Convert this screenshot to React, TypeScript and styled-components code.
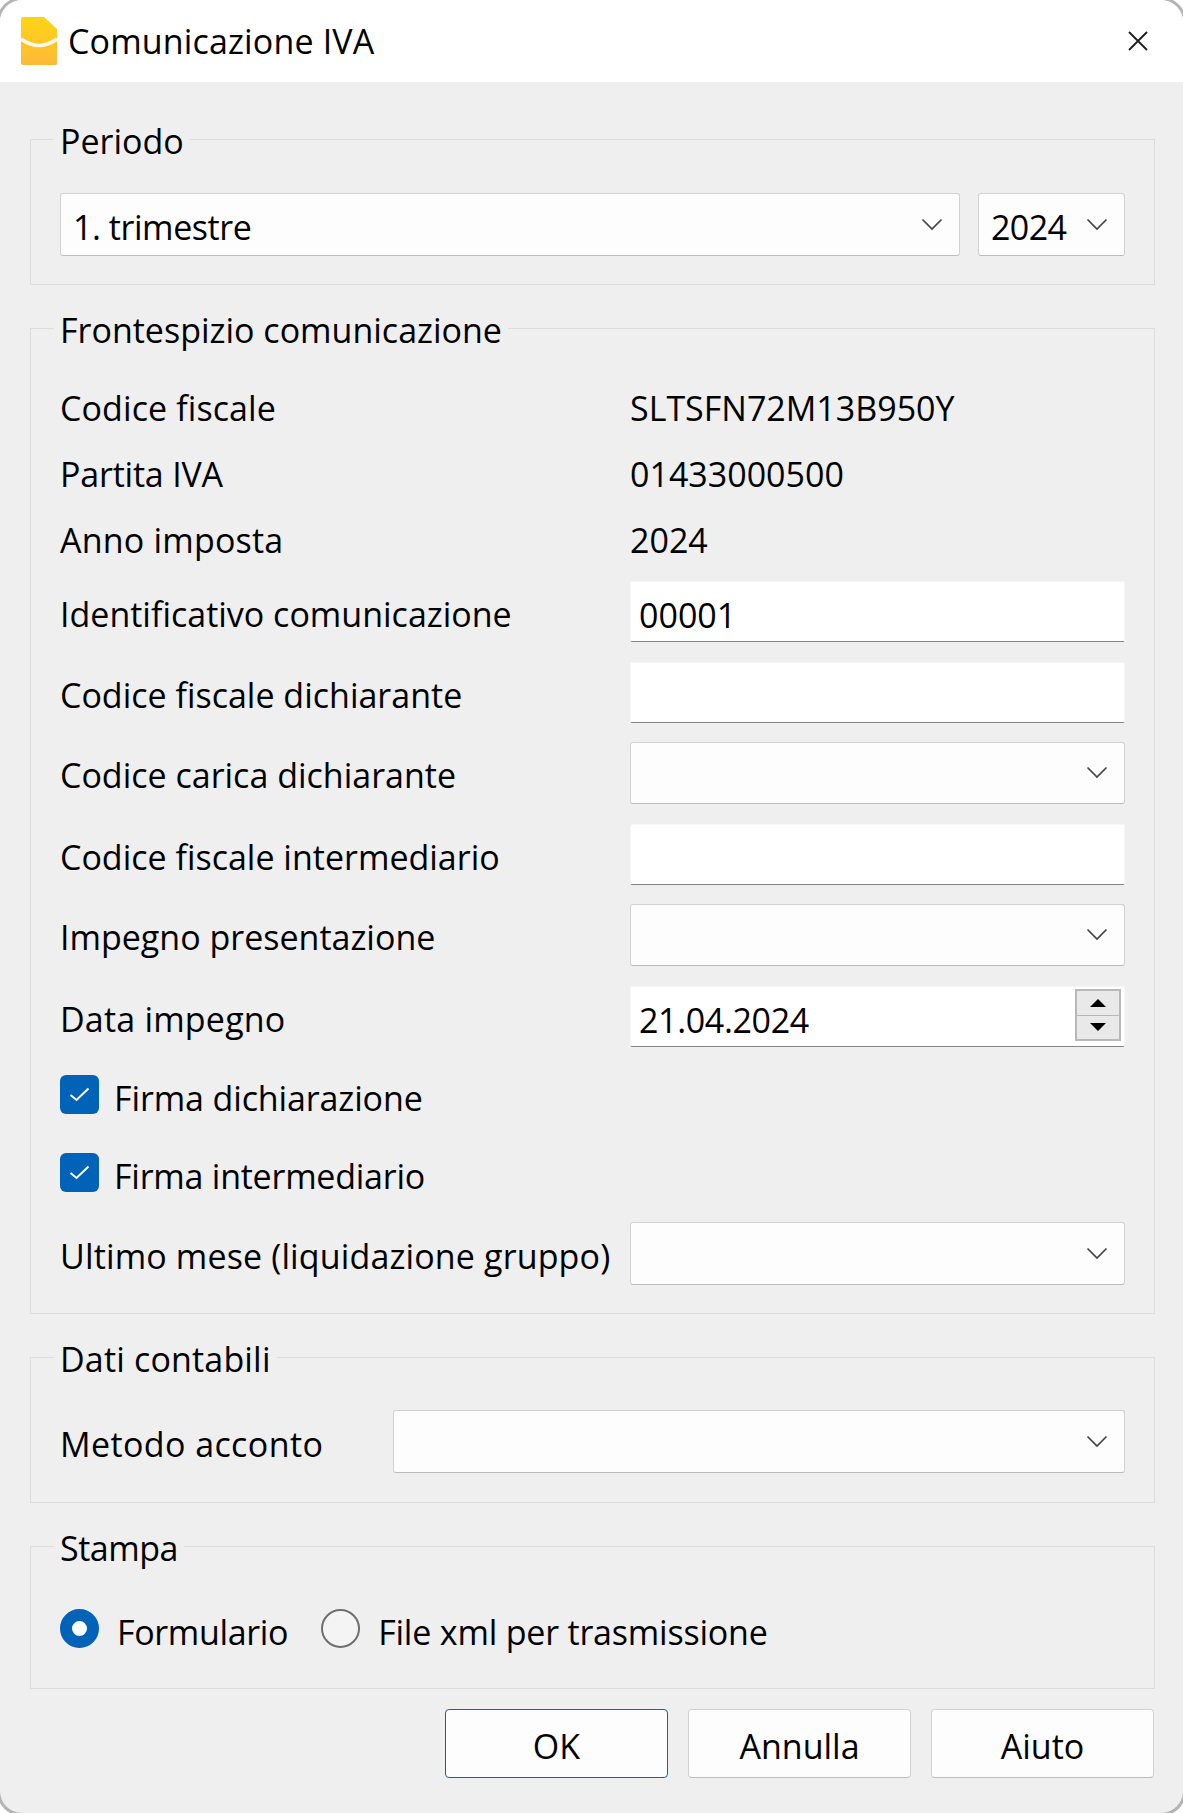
import styled, { createGlobalStyle } from "styled-components";

const GlobalStyle = createGlobalStyle`
  html, body {
    margin: 0;
    padding: 0;
    background: #ffffff;
  }
  body {
    font-family: "Open Sans", "Noto Sans", sans-serif;
    font-size: 34px;
    color: #000000;
  }
  * {
    box-sizing: border-box;
  }
`;

const Window = styled.div`
  width: 1183px;
  height: 1813px;
  display: flex;
  flex-direction: column;
  background: #efefef;
  border-radius: 22px;
  overflow: hidden;
  box-shadow: 0 0 0 3px #b4b4b4;
`;

const TitleBar = styled.header`
  height: 82px;
  flex: none;
  display: flex;
  align-items: center;
  background: #ffffff;
  padding: 0 35px 0 21px;
`;

const AppIcon = styled.svg`
  width: 36px;
  height: 48px;
  flex: none;
`;

const Title = styled.h1`
  flex: 1;
  margin: 0 0 0 11px;
  font-size: 34px;
  font-weight: 400;
  letter-spacing: 0.15px;
`;

const CloseIcon = styled.svg`
  width: 20px;
  height: 20px;
  flex: none;
`;

const Content = styled.main`
  flex: 1;
  display: flex;
  flex-direction: column;
  gap: 23px;
  padding: 37px 28px 0 30px;
`;

const Group = styled.fieldset<{ $top: number; $bottom?: number }>`
  margin: 0;
  min-width: 0;
  border: 1px solid #dcdcdc;
  padding: ${(p) => p.$top}px 29px ${(p) => p.$bottom ?? 28}px 29px;
`;

const Legend = styled.legend<{ $track?: number }>`
  margin-left: -6px;
  padding: 0 6px;
  height: 40px;
  line-height: 44px;
  letter-spacing: ${(p) => p.$track ?? 0}px;
`;

const PeriodRow = styled.div`
  display: flex;
  gap: 18px;
`;

const SelectBox = styled.div<{ $width?: number; $track?: number }>`
  height: 63px;
  flex: ${(p) => (p.$width ? `0 0 ${p.$width}px` : "1")};
  display: flex;
  align-items: center;
  justify-content: space-between;
  padding: 4px 16px 0 12px;
  background: #fdfdfd;
  border: 1px solid #d2d2d2;
  border-bottom-color: #bcbcbc;
  border-radius: 3px;
  letter-spacing: ${(p) => p.$track ?? 0}px;
`;

const Chevron = styled.svg`
  width: 22px;
  height: 13px;
  flex: none;
  margin-top: -5px;
  margin-left: auto;
`;

const StaticList = styled.div`
  margin-bottom: 8px;
`;

const StaticRow = styled.div`
  height: 66px;
  display: grid;
  grid-template-columns: 570px 1fr;
  align-items: center;
`;

const Label = styled.span<{ $track?: number }>`
  white-space: nowrap;
  letter-spacing: ${(p) => p.$track ?? 0}px;
`;

const FieldStack = styled.div`
  display: flex;
  flex-direction: column;
`;

const FieldRow = styled.div<{ $gap: number; $height: number }>`
  height: ${(p) => p.$height}px;
  margin-bottom: ${(p) => p.$gap}px;
  display: grid;
  grid-template-columns: 570px 1fr;
  align-items: stretch;
  ${Label} {
    align-self: center;
    margin-top: 4px;
  }
  ${SelectBox} {
    height: 100%;
  }
`;

const TextField = styled.div<{ $track?: number }>`
  position: relative;
  display: flex;
  align-items: center;
  padding: 6px 8px 0;
  background: #ffffff;
  border: 1px solid #f6f6f6;
  border-bottom: 1px solid #858585;
  border-radius: 2px;
  letter-spacing: ${(p) => p.$track ?? 0}px;
`;

const Spinner = styled.div`
  position: absolute;
  top: 2px;
  right: 3px;
  width: 46px;
  height: 52px;
  display: flex;
  flex-direction: column;
  border: 2px solid #b8b8b8;
  background: #e9e9e9;
`;

const SpinButton = styled.div<{ $down?: boolean }>`
  flex: 1;
  display: flex;
  align-items: center;
  justify-content: center;
  border-top: ${(p) => (p.$down ? "1px solid #b8b8b8" : "none")};
  &::before {
    content: "";
    width: 0;
    height: 0;
    border-left: 8px solid transparent;
    border-right: 8px solid transparent;
    ${(p) =>
      p.$down ? "border-top: 8px solid #000000;" : "border-bottom: 8px solid #000000;"}
  }
`;

const CheckRow = styled.div<{ $gap: number }>`
  display: flex;
  align-items: center;
  gap: 15px;
  height: 39px;
  margin-bottom: ${(p) => p.$gap}px;
`;

const CheckBox = styled.span`
  width: 39px;
  height: 39px;
  flex: none;
  display: flex;
  align-items: center;
  justify-content: center;
  background: #0063b8;
  border-radius: 6px;
`;

const CheckText = styled(Label)`
  margin-top: 6px;
`;

const MethodRow = styled.div`
  display: grid;
  grid-template-columns: 333px 1fr;
  align-items: center;
  height: 63px;
  ${Label} {
    margin-top: 5px;
  }
  ${SelectBox} {
    height: 100%;
  }
`;

const RadioRow = styled.div`
  display: flex;
  align-items: center;
  height: 39px;
`;

const RadioLabel = styled(Label)<{ $gap: number }>`
  margin: 7px ${(p) => p.$gap}px 0 18px;
`;

const Radio = styled.span<{ $checked?: boolean }>`
  width: 39px;
  height: 39px;
  flex: none;
  border-radius: 50%;
  background: ${(p) => (p.$checked ? "#ffffff" : "#f4f4f4")};
  border: ${(p) => (p.$checked ? "12px solid #0063b8" : "2px solid #6e6e6e")};
`;

const ButtonBar = styled.footer`
  display: flex;
  justify-content: flex-end;
  gap: 20px;
  margin-top: -3px;
  padding-right: 1px;
`;

const Button = styled.button<{ $primary?: boolean }>`
  width: 223px;
  height: 69px;
  padding: 4px 0 0;
  background: #fdfdfd;
  border: 1px solid ${(p) => (p.$primary ? "#0067c0" : "#d2d2d2")};
  border-bottom-color: ${(p) => (p.$primary ? "#0067c0" : "#bcbcbc")};
  border-radius: 4px;
  font-family: inherit;
  font-size: 34px;
  color: #000000;
`;

const ChevronIcon = () => (
  <Chevron viewBox="0 0 22 13" fill="none">
    <path d="M1.5 1.5 L11 11 L20.5 1.5" stroke="#444444" strokeWidth="1.7" />
  </Chevron>
);

const Tick = () => (
  <svg width="21" height="15" viewBox="0 0 21 15" fill="none">
    <path d="M1.5 8 L7.5 13 L19.5 1.5" stroke="#ffffff" strokeWidth="2" />
  </svg>
);

const staticRows = [
  { name: "Codice fiscale", value: "SLTSFN72M13B950Y", track: 0.1 },
  { name: "Partita IVA", value: "01433000500", track: -0.2 },
  { name: "Anno imposta", value: "2024", track: 0.2 },
];

export default function App() {
  return (
    <>
      <GlobalStyle />
      <Window>
        <TitleBar>
          <AppIcon viewBox="0 0 36 48">
            <defs>
              <linearGradient id="icon-fill" x1="0" y1="0" x2="0" y2="1">
                <stop offset="0" stopColor="#ffd516" />
                <stop offset="1" stopColor="#fdb937" />
              </linearGradient>
            </defs>
            <path
              d="M2 0 H23 L36 12 V46 Q36 48 34 48 H2 Q0 48 0 46 V2 Q0 0 2 0 Z"
              fill="url(#icon-fill)"
            />
            <path d="M0 22 Q18 35 36 22" stroke="#fff8e6" strokeWidth="3.5" fill="none" />
          </AppIcon>
          <Title>Comunicazione IVA</Title>
          <CloseIcon viewBox="0 0 20 20" fill="none">
            <path d="M1 1 L19 19 M19 1 L1 19" stroke="#1c1c1c" strokeWidth="1.8" />
          </CloseIcon>
        </TitleBar>
        <Content>
          <Group $top={34}>
            <Legend>Periodo</Legend>
            <PeriodRow>
              <SelectBox $track={-0.45}>
                1. trimestre
                <ChevronIcon />
              </SelectBox>
              <SelectBox $width={147} $track={-0.6}>
                2024
                <ChevronIcon />
              </SelectBox>
            </PeriodRow>
          </Group>

          <Group $top={27}>
            <Legend>Frontespizio comunicazione</Legend>
            <StaticList>
              {staticRows.map((row) => (
                <StaticRow key={row.name}>
                  <Label $track={row.track}>{row.name}</Label>
                  <Label>{row.value}</Label>
                </StaticRow>
              ))}
            </StaticList>
            <FieldStack>
              <FieldRow $height={61} $gap={20}>
                <Label>Identificativo comunicazione</Label>
                <TextField>00001</TextField>
              </FieldRow>
              <FieldRow $height={61} $gap={19}>
                <Label>Codice fiscale dichiarante</Label>
                <TextField />
              </FieldRow>
              <FieldRow $height={62} $gap={20}>
                <Label>Codice carica dichiarante</Label>
                <SelectBox>
                  <ChevronIcon />
                </SelectBox>
              </FieldRow>
              <FieldRow $height={61} $gap={19}>
                <Label>Codice fiscale intermediario</Label>
                <TextField />
              </FieldRow>
              <FieldRow $height={62} $gap={20}>
                <Label>Impegno presentazione</Label>
                <SelectBox>
                  <ChevronIcon />
                </SelectBox>
              </FieldRow>
              <FieldRow $height={61} $gap={28}>
                <Label $track={0.2}>Data impegno</Label>
                <TextField $track={-0.35}>
                  21.04.2024
                  <Spinner>
                    <SpinButton />
                    <SpinButton $down />
                  </Spinner>
                </TextField>
              </FieldRow>
            </FieldStack>
            <CheckRow $gap={39}>
              <CheckBox>
                <Tick />
              </CheckBox>
              <CheckText $track={-0.12}>Firma dichiarazione</CheckText>
            </CheckRow>
            <CheckRow $gap={30}>
              <CheckBox>
                <Tick />
              </CheckBox>
              <CheckText $track={-0.24}>Firma intermediario</CheckText>
            </CheckRow>
            <FieldRow $height={63} $gap={0}>
              <Label $track={0.14}>Ultimo mese (liquidazione gruppo)</Label>
              <SelectBox>
                <ChevronIcon />
              </SelectBox>
            </FieldRow>
          </Group>

          <Group $top={33} $bottom={29}>
            <Legend $track={0.17}>Dati contabili</Legend>
            <MethodRow>
              <Label $track={0.4}>Metodo acconto</Label>
              <SelectBox>
                <ChevronIcon />
              </SelectBox>
            </MethodRow>
          </Group>

          <Group $top={43} $bottom={40}>
            <Legend $track={-0.5}>Stampa</Legend>
            <RadioRow>
              <Radio $checked />
              <RadioLabel $gap={33} $track={-0.35}>
                Formulario
              </RadioLabel>
              <Radio />
              <RadioLabel $gap={0} $track={-0.2}>
                File xml per trasmissione
              </RadioLabel>
            </RadioRow>
          </Group>

          <ButtonBar>
            <Button $primary>OK</Button>
            <Button>Annulla</Button>
            <Button>Aiuto</Button>
          </ButtonBar>
        </Content>
      </Window>
    </>
  );
}
